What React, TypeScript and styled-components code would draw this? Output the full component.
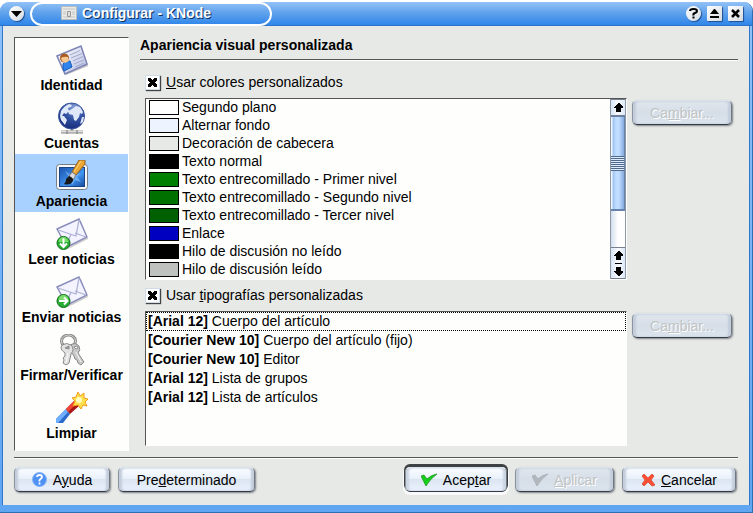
import React, { ReactNode } from 'react';
import styled, { createGlobalStyle, css } from 'styled-components';

const GlobalStyle = createGlobalStyle`
  * { box-sizing: border-box; }
  body { margin: 0; background: #fff; font-family: "Liberation Sans", Arial, sans-serif; font-size: 14px; line-height: 18px; color: #000; }
  button { font: inherit; color: inherit; padding: 0; }
  ul { list-style: none; margin: 0; padding: 0; }
  h1, h2 { margin: 0; font-size: inherit; }
`;

const Page = styled.div`
  min-height: 100vh;
  padding-top: 2px;
  display: flex;
`;

const Window = styled.main`
  flex: 1;
  display: flex;
  flex-direction: column;
  min-width: 0;
  border: solid #2f6fb8;
  border-width: 0 1px 1px 0;
  border-radius: 9px 9px 0 0;
  background: linear-gradient(#8fc2fa, #5fa5f2);
  padding: 0 2px 7px 2px;
  overflow: hidden;
`;

const TitleBar = styled.header`
  height: 24px;
  margin: 0 -2px;
  padding: 0 9px;
  display: flex;
  align-items: center;
  background: linear-gradient(#93c2f6, #62a3ec 45%, #2f86ea);
  border-bottom: 1px solid #2d72cb;
`;

const TitlePill = styled.div`
  width: 242px;
  height: 24px;
  margin-left: 6px;
  padding: 0 0 2px 29px;
  display: flex;
  align-items: center;
  gap: 5px;
  border: 2px solid #fff;
  border-radius: 12px;
`;

const Title = styled.h1`
  color: #fff;
  text-shadow: 1px 1px 0 #10305c;
  white-space: nowrap;
`;

const WindowButtons = styled.div`
  margin-left: auto;
  display: flex;
  gap: 6px;
`;

const TitleButton = styled.button<{ $round?: boolean }>`
  width: 15px;
  height: 15px;
  display: grid;
  place-items: center;
  border: 0;
  border-radius: ${p => (p.$round ? '50%' : '1px')};
  background: linear-gradient(135deg, #fff, #d6dbe1);
  box-shadow: 1px 1px 1px #1f4f92;
`;

const Client = styled.div`
  flex: 1;
  display: flex;
  flex-direction: column;
  padding: 11px 11px 13px;
  border: solid #2f76cd;
  border-width: 0 1px;
  background: #e7e9e6;
`;

const Body = styled.div`
  flex: 1;
  display: flex;
  gap: 11px;
`;

const Sunken = css`
  background: #fefffd;
  border: solid 1px #fff;
  border-top-color: #555;
  border-left-color: #555;
`;

const Sidebar = styled.nav`
  ${Sunken}
  flex: none;
  width: 115px;
`;

const SideItem = styled.button<{ $active?: boolean }>`
  width: 100%;
  height: 58px;
  padding-top: 6px;
  display: flex;
  flex-direction: column;
  align-items: center;
  border: 0;
  background: ${p => (p.$active ? '#a9d1ff' : 'transparent')};
  font-weight: bold;
  white-space: nowrap;
`;

const Content = styled.section`
  flex: 1;
  min-width: 0;
  display: flex;
  flex-direction: column;
`;

const Heading = styled.h2`
  height: 22px;
  line-height: 16px;
`;

const Rule = styled.hr`
  width: 100%;
  height: 2px;
  margin: 0;
  border: solid #555;
  border-width: 1px 0 0;
  background: #fff;
`;

const FooterRule = styled(Rule)`
  margin-top: 6px;
`;

const Settings = styled.div`
  flex: 1;
  display: grid;
  grid-template-columns: minmax(0, 1fr) 100px;
  grid-template-rows: 19px minmax(182px, 182fr) 19px minmax(135px, 135fr);
  column-gap: 5px;
  row-gap: 6px;
  padding: 12px 6px 5px 5px;
`;

const CheckLabel = styled.label`
  grid-column: 1 / -1;
  align-self: start;
  display: flex;
  align-items: center;
  gap: 6px;
`;

const Check = styled.input`
  appearance: none;
  width: 15px;
  height: 15px;
  margin: 0;
  border: 1px solid #cfdbe8;
  background: #fff;
  box-shadow: 1px 1px 1px #444;
  display: grid;
  place-items: center;
  &:checked::before {
    content: "";
    width: 9px;
    height: 9px;
    background:
      linear-gradient(45deg, transparent 37%, #000 37%, #000 63%, transparent 63%),
      linear-gradient(-45deg, transparent 37%, #000 37%, #000 63%, transparent 63%);
  }
`;

const ListBox = styled.div`
  ${Sunken}
  display: flex;
  min-height: 0;
`;

const Rows = styled.ul`
  flex: 1;
  min-width: 0;
`;

const ColorRow = styled.li`
  height: 18px;
  padding: 0 0 1px 3px;
  display: flex;
  align-items: center;
  gap: 3px;
  line-height: 17px;
  white-space: nowrap;
`;

const Swatch = styled.span<{ $color: string }>`
  width: 30px;
  height: 15px;
  border: 1px solid #000;
  background: ${p => p.$color};
`;

const FontRow = styled.li<{ $focused?: boolean }>`
  height: 19px;
  padding: 0 1px;
  border: 1px dotted ${p => (p.$focused ? '#000' : 'transparent')};
  line-height: 17px;
  white-space: nowrap;
`;

const ScrollBar = styled.div`
  width: 16px;
  display: flex;
  flex-direction: column;
  background: linear-gradient(to right, #d3dfee, #fff 50%);
  border: solid #8c97a6;
  border-width: 0 1px;
`;

const ScrollButton = styled.button<{ $double?: boolean }>`
  flex: none;
  height: ${p => (p.$double ? 32 : 17)}px;
  display: grid;
  place-items: center;
  border: solid #76808e;
  border-width: 1px 0;
  background: linear-gradient(to right, #d8e6f7, #f8fbff 50%, #dce9f8);
`;

const Track = styled.div`
  flex: 1;
`;

const Thumb = styled.div`
  height: 95px;
  display: flex;
  align-items: center;
  border: solid #6583ab;
  border-width: 1px 1px 2px 0;
  background: linear-gradient(to right, #f1f8ff 1px, #9cc2f0 2px, #c0dcff 5px, #c0dcff 8px, #84abdf);
`;

const Grip = styled.div`
  width: 100%;
  height: 15px;
  background: repeating-linear-gradient(#51698a 0 1px, #dcebff 1px 2px);
`;

const PushCell = styled.div`
  padding-top: 2px;
`;

const PushButton = styled.button<{ $width: number; $primary?: boolean }>`
  width: ${p => p.$width}px;
  height: 25px;
  display: flex;
  align-items: center;
  justify-content: center;
  gap: 6px;
  border: 1px solid;
  border-color: #dde3ea #6f7883 #343b45 #8a939e;
  border-radius: 5px;
  background: linear-gradient(#fafdff, #eaf1fb 45%, #dbe5f1 50%, #eaf2fc);
  box-shadow: inset 3px 0 2px #c3cddb, inset -3px 0 2px #c3cddb, 1px 1px 2px #7d8186;
  white-space: nowrap;
  ${p => p.$primary && css`
    box-shadow: inset 3px 0 2px #cbd5e2, inset -3px 0 2px #cbd5e2, 0 -2px 0 1px #3d4044, 0 1px 0 2px #fafafa;
  `}
  &:disabled {
    color: #c0c3c4;
    text-shadow: 1px 1px 0 #fff;
    background: linear-gradient(#e0e6ed, #d6dee8 50%, #dbe3ed);
  }
`;

const Footer = styled.footer`
  display: flex;
  align-items: center;
  gap: 8px;
  padding: 8px 2px 0 0;
`;

const Spacer = styled.div`
  flex: 1;
`;

const DoubleArrow = styled.span`
  display: flex;
  flex-direction: column;
  align-items: center;
  gap: 3px;
`;

const ArrowRule = styled.span`
  width: 7px;
  height: 1px;
  background: #000;
`;

function IdentityIcon() {
  return (
    <svg width="32" height="32" viewBox="0 0 32 32" aria-hidden="true">
      <defs><linearGradient id="card" x1="0" y1="0" x2="1" y2="1"><stop stopColor="#fff" /><stop offset="1" stopColor="#b4bde4" /></linearGradient></defs>
      <path d="M3 14 26 4l6 18L10 31Z" fill="#a5a5aa" opacity=".7" />
      <path d="M1 12 25 2l6 18L9 30Z" fill="url(#card)" stroke="#8085b5" strokeWidth="1.6" />
      <path d="m14 11 10-4.500M15 14l11-4.500M17 17l10-4.500M18 20l10-4M19 23l9-4" stroke="#a2a8c8" />
      <path d="m7 25 0-5 3-3 4 0 2 6-8 4Z" fill="#2f83ec" stroke="#155bb9" />
      <circle cx="8.500" cy="14" r="4.500" fill="#a95c22" /><path d="M5 14q3-2 7-1l1 4-4 2-3-2Z" fill="#f7c88f" />
    </svg>
  );
}

function GlobeIcon() {
  return (
    <svg width="32" height="32" viewBox="0 0 32 32" aria-hidden="true">
      <defs><radialGradient id="globe" cx=".62" cy=".2" r=".8"><stop stopColor="#8ba5da" /><stop offset=".5" stopColor="#3453a6" /><stop offset="1" stopColor="#172e7c" /></radialGradient></defs>
      <path d="M5 30h22M12 30h9M16 26v3" stroke="#888" strokeWidth="3" /><path d="M5 29.500h22M12 29.500h9" stroke="#ddd" strokeWidth="2" /><path d="M11 28v4M21 28v4" stroke="#777" />
      <circle cx="15.500" cy="14" r="13" fill="url(#globe)" stroke="#3d55a0" />
      <path d="M5 9q3-5 8-7l3 1-1 2-3 1 1 3-3 3-2-1-2 3-2 0ZM16 7l4-3 4 1 3 5-1 2-2-1-1 4-3 4-2-1-1-5-4-1-1-3ZM4 14l4 0 3 4-2 5-4-5ZM26 15l2 0-1 5-3 2Z" fill="#dfe8f8" />
    </svg>
  );
}

function BrushIcon() {
  return (
    <svg width="32" height="32" viewBox="0 0 32 32" aria-hidden="true">
      <defs><linearGradient id="screen" x1="0" y1="0" x2="1" y2="1"><stop stopColor="#1c55b0" /><stop offset=".6" stopColor="#3f93ee" /><stop offset="1" stopColor="#164a9f" /></linearGradient></defs>
      <rect x=".5" y="4.500" width="31" height="25" rx="3" fill="#f6f7f8" stroke="#777d86" />
      <rect x="3.500" y="7.500" width="25" height="19" fill="url(#screen)" stroke="#1a4486" />
      <path d="m9 11 6 4 2-5 2 5 6-2-4 4 4 5-6-2-3 5-1-6-7 2 5-4Z" fill="#79b9fa" opacity=".75" />
      <path d="M23 0h6v4l-9 11-4-3Z" fill="#eca632" stroke="#94601f" /><path d="M25 1 18 12" stroke="#ffd37b" />
      <path d="m16 12 4 3-3 5-4-4Z" fill="#d8dadd" stroke="#777" />
      <path d="M13 16q5 2 4 5-3 5-9 3 2-2 2-5Z" fill="#17191e" />
    </svg>
  );
}

function MailIcon({ down = false }: { down?: boolean }) {
  return (
    <svg width="32" height="32" viewBox="0 0 32 32" aria-hidden="true">
      <path d="M4 13 25 3l7 18-20 10Z" fill="#999" opacity=".5" />
      <path d="M1 11 23 1l8 18-20 10Z" fill="#f3f4ff" stroke="#8b8ebc" strokeWidth="1.4" />
      <path d="m2 12 18 6 3-16M10 28l5-12M30 19l-11-4" fill="none" stroke="#aeb1d3" strokeWidth="1.3" />
      <circle cx="7.500" cy="25" r="6.500" fill="#27ae32" stroke="#116b1a" />
      <path d="M2.500 24a5 5 0 0 1 10 0" fill="#78dc6c" />
      <g transform={down ? 'rotate(90 7.5 25)' : undefined}><path d="M3 25h8M8 21.500l3.500 3.500L8 28.500" fill="none" stroke="#fff" strokeWidth="2" /></g>
    </svg>
  );
}

function KeysIcon() {
  return (
    <svg width="32" height="32" viewBox="0 0 32 32" aria-hidden="true">
      <g fill="none"><ellipse cx="12.500" cy="7" rx="7" ry="6" stroke="#8a8a8a" strokeWidth="3" /><ellipse cx="12.500" cy="7" rx="7" ry="6" stroke="#d5d5d5" /></g>
      <path fillRule="evenodd" d="M14 11q6-3 9 1 2 4-1 7l6 9-3 3-3-2-1-3-2-1-1-3-3-4q-4-4-1-7Zm4 2 2 2 2-1-1-2Z" fill="#c9c9c9" stroke="#8a8a8a" />
      <path fillRule="evenodd" d="M6 11q5-3 9 0 4 4 0 9l-2 9-3 2-3-2 1-3-1-2 2-2 0-3q-6-4-3-8Zm3 3 4 1 0-3Z" fill="#e2e2e2" stroke="#8a8a8a" />
      <path d="m12 19-2 10M20 18l5 10" stroke="#f8f8f8" />
    </svg>
  );
}

function WandIcon() {
  return (
    <svg width="32" height="32" viewBox="0 0 32 32" aria-hidden="true">
      <path d="M0 27 10 17l4 5-7 9H0Z" fill="#2c6bcb" /><path d="M0 27 10 17l2 3L2 31H0Z" fill="#6eafff" />
      <path d="m10 17 8-8 5 5-9 8Z" fill="#a91616" /><path d="m10 17 8-8 2 3-8 8Z" fill="#f04435" />
      <path d="m22 0 2 4 4-3 0 5 4 1-3 3 2 4-4-1-2 4-3-4-5 1 2-5-3-3 4-1Z" fill="#ffe14d" stroke="#f29a19" /><circle cx="23" cy="8" r="3" fill="#fffbc2" />
    </svg>
  );
}

function CheckIcon({ muted = false }: { muted?: boolean }) {
  return <svg width="16" height="14" viewBox="0 0 16 14" aria-hidden="true"><path d="m0 3 3-1 3 4q4-4 10-5Q9 6 5 13Z" fill={muted ? '#b3b8be' : '#14cf19'} stroke={muted ? '#a4aab1' : '#188c16'} strokeWidth=".7" /></svg>;
}

function CancelIcon() {
  return <svg width="14" height="14" viewBox="0 0 14 14" aria-hidden="true"><path d="m1 3 2-2 4 4 4-4 2 2-3 4 4 5-3 1-4-4-4 4-2-2 3-4Z" fill="#fa5036" stroke="#d63c22" strokeWidth=".7" /></svg>;
}

function HelpIcon() {
  return <svg width="15" height="15" viewBox="0 0 15 15" aria-hidden="true"><circle cx="7.500" cy="7.500" r="7" fill="#4f90f4" stroke="#87b7fa" /><path d="M5 5q0-2 2.500-2T10 5q0 1-1.500 2T7.500 9.500m0 1v2" stroke="#fff" strokeWidth="1.800" fill="none" /></svg>;
}

function AppIcon() {
  return (
    <svg width="16" height="14" viewBox="0 0 16 14" aria-hidden="true">
      <path fill="#e9ebe8" stroke="#b8bcbb" d="M.5.5h15v13H.5Z" />
      <path d="M2 3h12M2 6h3m6 0h3M2 8h3m6 0h3M2 11h12" stroke="#c4c4c1" />
      <path fill="#ddd" stroke="#999" d="M6.500 5.500h3v5h-3Z" />
    </svg>
  );
}

function Arrow({ down = false }: { down?: boolean }) {
  return <svg width="9" height="9" viewBox="0 0 9 9" shapeRendering="crispEdges" aria-hidden="true"><path transform={down ? 'rotate(180 4.5 4.5)' : undefined} d="M4 0h1l4 4v1H7v4H2V5H0V4Z" /></svg>;
}

const sections: { label: string; icon: ReactNode }[] = [
  { label: 'Identidad', icon: <IdentityIcon /> },
  { label: 'Cuentas', icon: <GlobeIcon /> },
  { label: 'Apariencia', icon: <BrushIcon /> },
  { label: 'Leer noticias', icon: <MailIcon down /> },
  { label: 'Enviar noticias', icon: <MailIcon /> },
  { label: 'Firmar/Verificar', icon: <KeysIcon /> },
  { label: 'Limpiar', icon: <WandIcon /> },
];

const colors = [
  ['Segundo plano', '#ffffff'],
  ['Alternar fondo', '#edf4ff'],
  ['Decoración de cabecera', '#e7e9e6'],
  ['Texto normal', '#000000'],
  ['Texto entrecomillado - Primer nivel', '#008000'],
  ['Texto entrecomillado - Segundo nivel', '#007000'],
  ['Texto entrecomillado - Tercer nivel', '#006000'],
  ['Enlace', '#0000c0'],
  ['Hilo de discusión no leído', '#000000'],
  ['Hilo de discusión leído', '#bfc1be'],
];

const fonts = [
  ['Arial 12', 'Cuerpo del artículo'],
  ['Courier New 10', 'Cuerpo del artículo (fijo)'],
  ['Courier New 10', 'Editor'],
  ['Arial 12', 'Lista de grupos'],
  ['Arial 12', 'Lista de artículos'],
];

export default function App() {
  return (
    <>
      <GlobalStyle />
      <Page>
        <Window>
          <TitleBar>
            <TitleButton $round aria-label="Menú de la ventana"><svg width="11" height="6" viewBox="0 0 11 6"><path d="M0 0h11L5.500 6Z" /></svg></TitleButton>
            <TitlePill>
              <AppIcon />
              <Title>Configurar - KNode</Title>
            </TitlePill>
            <WindowButtons>
              <TitleButton $round aria-label="Ayuda"><svg width="9" height="11" viewBox="0 0 9 11"><path d="M1 3q0-2 3.500-2T8 3q0 1.500-2 2T4.500 7.500m0 1v2" fill="none" stroke="#000" strokeWidth="2" /></svg></TitleButton>
              <TitleButton aria-label="Maximizar"><svg width="9" height="9" viewBox="0 0 9 9"><path d="M4 0h1l4 5H0ZM0 7h9v2H0Z" /></svg></TitleButton>
              <TitleButton aria-label="Cerrar"><svg width="9" height="9" viewBox="0 0 9 9"><path d="m1 1 7 7M8 1 1 8" stroke="#000" strokeWidth="2.500" /></svg></TitleButton>
            </WindowButtons>
          </TitleBar>
          <Client>
            <Body>
              <Sidebar aria-label="Secciones">
                {sections.map(s => (
                  <SideItem key={s.label} $active={s.label === 'Apariencia'}>{s.icon}<span>{s.label}</span></SideItem>
                ))}
              </Sidebar>
              <Content>
                <Heading>Apariencia visual personalizada</Heading>
                <Rule />
                <Settings>
                  <CheckLabel><Check type="checkbox" defaultChecked /><span><u>U</u>sar colores personalizados</span></CheckLabel>
                  <ListBox>
                    <Rows>
                      {colors.map(([name, color]) => <ColorRow key={name}><Swatch $color={color} />{name}</ColorRow>)}
                    </Rows>
                    <ScrollBar>
                      <ScrollButton aria-label="Subir"><Arrow /></ScrollButton>
                      <Track><Thumb><Grip /></Thumb></Track>
                      <ScrollButton $double aria-label="Bajar"><DoubleArrow><Arrow /><ArrowRule /><Arrow down /></DoubleArrow></ScrollButton>
                    </ScrollBar>
                  </ListBox>
                  <PushCell><PushButton $width={100} disabled><span>Ca<u>m</u>biar...</span></PushButton></PushCell>
                  <CheckLabel><Check type="checkbox" defaultChecked /><span>Usar <u>t</u>ipografías personalizadas</span></CheckLabel>
                  <ListBox>
                    <Rows>
                      {fonts.map(([font, use], i) => <FontRow key={use} $focused={i === 0}><b>[{font}]</b> {use}</FontRow>)}
                    </Rows>
                  </ListBox>
                  <PushCell><PushButton $width={100} disabled><span>Ca<u>m</u>biar...</span></PushButton></PushCell>
                </Settings>
              </Content>
            </Body>
            <FooterRule />
            <Footer>
              <PushButton $width={96}><HelpIcon /><span>A<u>y</u>uda</span></PushButton>
              <PushButton $width={137}><span>Pre<u>d</u>eterminado</span></PushButton>
              <Spacer />
              <PushButton $width={102} $primary><CheckIcon /><span>Acep<u>t</u>ar</span></PushButton>
              <PushButton $width={99} disabled><CheckIcon muted /><span><u>A</u>plicar</span></PushButton>
              <PushButton $width={114}><CancelIcon /><span><u>C</u>ancelar</span></PushButton>
            </Footer>
          </Client>
        </Window>
      </Page>
    </>
  );
}
